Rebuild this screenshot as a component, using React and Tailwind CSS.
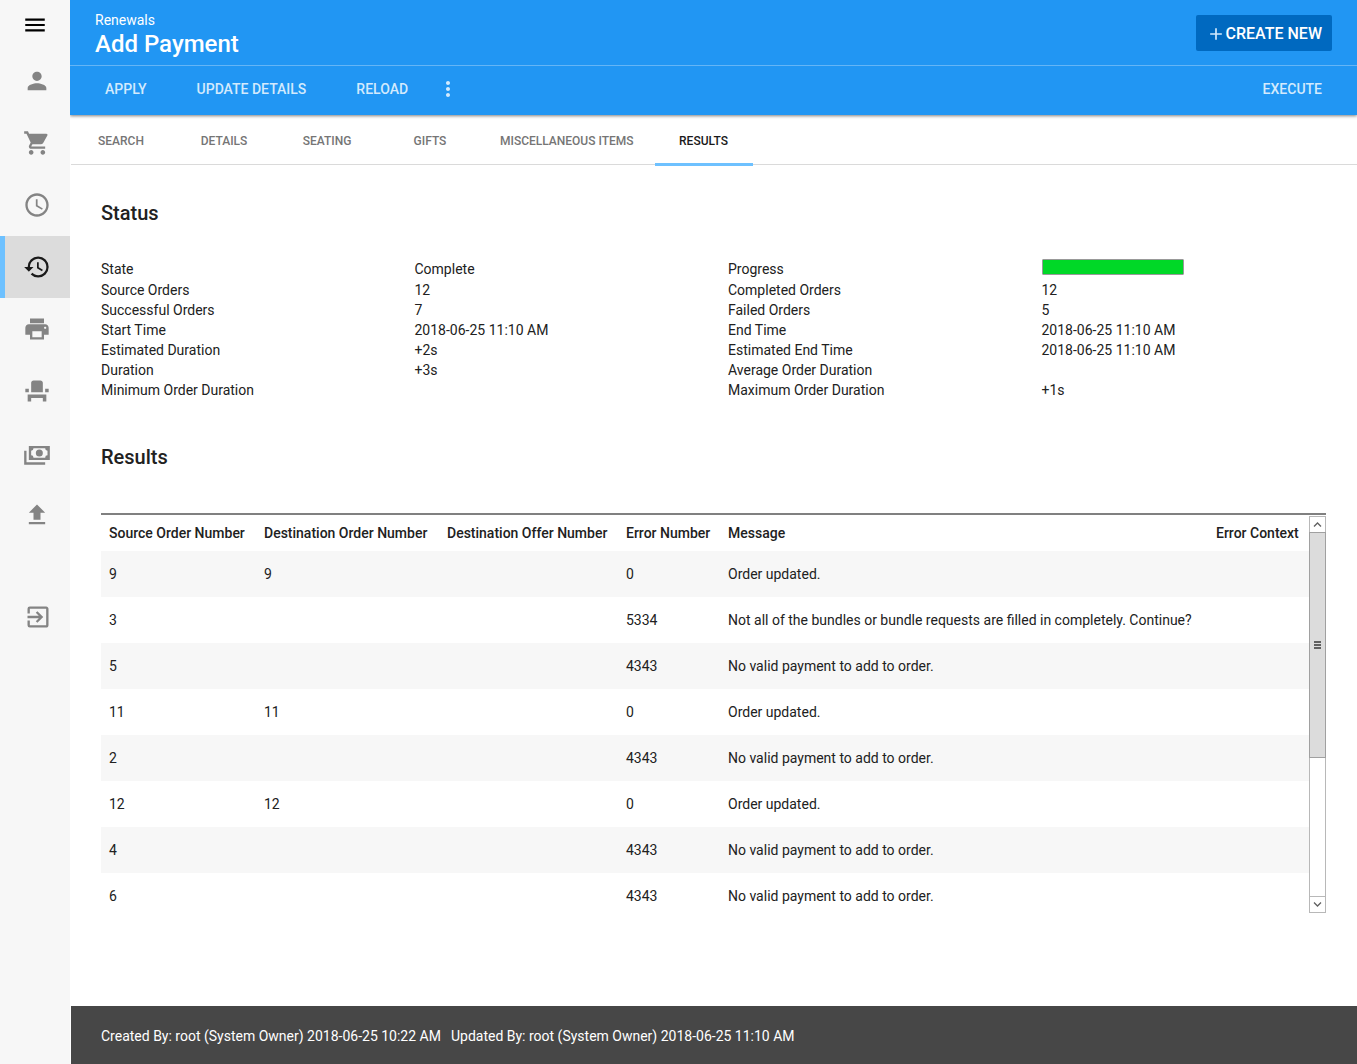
import React, { useState } from "react";
import {
  MdMenu,
  MdPerson,
  MdShoppingCart,
  MdAccessTime,
  MdHistory,
  MdPrint,
  MdEventSeat,
  MdFileUpload,
  MdExitToApp,
  MdMoreVert,
  MdAdd,
} from "react-icons/md";

// Stack of bank notes, the md set has no icon for it
function CashIcon({ className }) {
  return (
    <svg className={className} viewBox="0 0 24 24" fill="currentColor">
      <path d="M5,6H23V18H5V6M14,9A3,3 0 0,1 17,12A3,3 0 0,1 14,15A3,3 0 0,1 11,12A3,3 0 0,1 14,9M9,8A2,2 0 0,1 7,10V14A2,2 0 0,1 9,16H19A2,2 0 0,1 21,14V10A2,2 0 0,1 19,8H9M1,10H3V20H19V22H1V10Z" />
    </svg>
  );
}

const navItems = [
  { label: "Customers", icon: MdPerson },
  { label: "Orders", icon: MdShoppingCart },
  { label: "Schedule", icon: MdAccessTime },
  { label: "Renewals", icon: MdHistory, active: true },
  { label: "Printing", icon: MdPrint },
  { label: "Seating", icon: MdEventSeat },
  { label: "Payments", icon: CashIcon },
  { label: "Upload", icon: MdFileUpload },
];

const tabs = ["Search", "Details", "Seating", "Gifts", "Miscellaneous Items", "Results"];

const statusRows = [
  ["Source Orders", "12", "Completed Orders", "12"],
  ["Successful Orders", "7", "Failed Orders", "5"],
  ["Start Time", "2018-06-25 11:10 AM", "End Time", "2018-06-25 11:10 AM"],
  ["Estimated Duration", "+2s", "Estimated End Time", "2018-06-25 11:10 AM"],
  ["Duration", "+3s", "Average Order Duration", ""],
  ["Minimum Order Duration", "", "Maximum Order Duration", "+1s"],
];

const UPDATED = "Order updated.";
const NO_PAYMENT = "No valid payment to add to order.";

const results = [
  { source: 9, destination: 9, error: 0, message: UPDATED },
  {
    source: 3,
    error: 5334,
    message: "Not all of the bundles or bundle requests are filled in completely. Continue?",
  },
  { source: 5, error: 4343, message: NO_PAYMENT },
  { source: 11, destination: 11, error: 0, message: UPDATED },
  { source: 2, error: 4343, message: NO_PAYMENT },
  { source: 12, destination: 12, error: 0, message: UPDATED },
  { source: 4, error: 4343, message: NO_PAYMENT },
  { source: 6, error: 4343, message: NO_PAYMENT },
];

function Sidebar() {
  return (
    <nav className="relative z-10 w-[70px] shrink-0 bg-[#f7f7f7] text-[#848484]">
      <button className="flex h-[50px] w-full items-center justify-center text-black" aria-label="Menu">
        <MdMenu className="size-[26px]" />
      </button>
      {navItems.map(({ label, icon: Icon, active }) => (
        <a
          key={label}
          href="#"
          aria-label={label}
          className={`flex h-[62px] items-center justify-center border-l-5 pr-0.5 ${
            active ? "border-[#6ec1ff] bg-[#dcdcdc] text-[#1a1a1a]" : "border-transparent"
          }`}
        >
          <Icon className="size-7" />
        </a>
      ))}
      <a
        href="#"
        aria-label="Log out"
        className="mt-10 flex h-[62px] items-center justify-center border-l-5 border-transparent"
      >
        <MdExitToApp className="size-7" />
      </a>
    </nav>
  );
}

function ToolbarButton({ children }) {
  return <button className="h-full px-[25px] font-medium uppercase text-[#d3eafd]">{children}</button>;
}

function Header() {
  return (
    <header className="relative bg-[#2196f3] text-white shadow-[0_1px_3px_rgba(0,0,0,0.5)]">
      <div className="flex h-[66px] items-center justify-between border-b border-[#64b5f6] px-[25px]">
        <div className="flex flex-col pt-0.5">
          <span className="leading-5">Renewals</span>
          <h1 className="text-2xl font-medium leading-7">Add Payment</h1>
        </div>
        <button className="flex h-9 items-center rounded-xs bg-[#0069c0] pl-[10px] pr-[10px] pt-0.5 text-base font-medium">
          <MdAdd className="size-5 text-[#d3eafd]" />
          CREATE NEW
        </button>
      </div>
      <div className="flex h-[49px] items-center px-[10px] pb-[3px]">
        <ToolbarButton>Apply</ToolbarButton>
        <ToolbarButton>Update Details</ToolbarButton>
        <ToolbarButton>Reload</ToolbarButton>
        <button className="flex w-[30px] justify-center text-[#d3eafd]" aria-label="More actions">
          <MdMoreVert className="size-6" />
        </button>
        <div className="ml-auto h-full">
          <ToolbarButton>Execute</ToolbarButton>
        </div>
      </div>
    </header>
  );
}

function Tabs() {
  const [current, setCurrent] = useState("Results");

  return (
    <div role="tablist" className="ml-px flex h-[50px] gap-[5px] border-b border-[#dadada] pl-px">
      {tabs.map((tab) => (
        <button
          key={tab}
          role="tab"
          aria-selected={tab === current}
          onClick={() => setCurrent(tab)}
          className={`-mb-0.5 min-w-[98px] border-b-3 px-4 pt-1 text-xs font-medium uppercase ${
            tab === current ? "border-[#6ec1ff] text-[#1a1a1a]" : "border-transparent text-[#757575]"
          }`}
        >
          {tab}
        </button>
      ))}
    </div>
  );
}

function ProgressBar({ value }) {
  return (
    <div
      role="progressbar"
      aria-label="Progress"
      aria-valuenow={value}
      className="h-4 w-[142px] rounded-[1px] border border-[#999999] bg-white"
    >
      <div className="h-full bg-[#00d827]" style={{ width: `${value}%` }} />
    </div>
  );
}

function Status() {
  return (
    <section>
      <h2 className="text-xl font-medium leading-7">Status</h2>
      <div className="mt-8 grid grid-cols-4 pr-0.5 leading-5">
        <div>State</div>
        <div>Complete</div>
        <div>Progress</div>
        <div className="pb-[5px]">
          <ProgressBar value={100} />
        </div>
        {statusRows.flat().map((text, i) => (
          <div key={i} className="h-5">
            {text}
          </div>
        ))}
      </div>
    </section>
  );
}

function ScrollBar() {
  return (
    <div className="mt-px flex w-[17px] shrink-0 flex-col border border-[#b8b8b8] bg-white text-[#606060]">
      <button className="flex h-[15px] items-center justify-center" aria-label="Scroll up">
        <svg className="h-[5px] w-[9px]" viewBox="0 0 9 5" fill="none" stroke="currentColor">
          <path d="M1 4.5L4.5 1L8 4.5" strokeWidth="1.3" />
        </svg>
      </button>
      <div className="-mx-px grow">
        <div className="flex h-[62%] items-center justify-center border border-[#a0a0a0] bg-[#dcdcdc]">
          <svg className="h-2 w-[7px]" viewBox="0 0 7 8" fill="currentColor">
            <path d="M0 0h7v2H0zM0 3h7v2H0zM0 6h7v2H0z" />
          </svg>
        </div>
      </div>
      <button
        className="flex h-4 items-center justify-center border-t border-[#b8b8b8]"
        aria-label="Scroll down"
      >
        <svg className="h-[5px] w-[9px]" viewBox="0 0 9 5" fill="none" stroke="currentColor">
          <path d="M1 0.5L4.5 4L8 0.5" strokeWidth="1.3" />
        </svg>
      </button>
    </div>
  );
}

function ResultsTable() {
  return (
    <section className="mt-[43px] pr-[31px]">
      <h2 className="text-xl font-medium leading-7">Results</h2>
      <div className="mt-[42px] flex h-[400px] overflow-hidden border-t-2 border-[#808080]">
        <div className="grow overflow-hidden">
          <table className="w-full table-fixed text-left">
            <thead>
              <tr className="h-9 whitespace-nowrap">
                <th className="w-[155px] px-2 font-medium">Source Order Number</th>
                <th className="w-[183px] px-2 font-medium">Destination Order Number</th>
                <th className="w-[179px] px-2 font-medium">Destination Offer Number</th>
                <th className="w-[102px] px-2 font-medium">Error Number</th>
                <th className="px-2 font-medium">Message</th>
                <th className="w-[101px] px-2 font-medium">Error Context</th>
              </tr>
            </thead>
            <tbody>
              {results.map((row) => (
                <tr key={row.source} className="h-[46px] odd:bg-[#f7f7f7]">
                  <td className="px-2">{row.source}</td>
                  <td className="px-2">{row.destination}</td>
                  <td className="px-2"></td>
                  <td className="px-2">{row.error}</td>
                  <td className="px-2">{row.message}</td>
                  <td className="px-2"></td>
                </tr>
              ))}
            </tbody>
          </table>
        </div>
        <ScrollBar />
      </div>
    </section>
  );
}

function App() {
  return (
    <div className="flex min-h-screen bg-white font-['Roboto',sans-serif] text-sm text-[#212121]">
      <Sidebar />
      <div className="flex min-w-0 grow flex-col">
        <Header />
        <Tabs />
        <main className="grow pb-10 pl-[31px] pt-[34px]">
          <Status />
          <ResultsTable />
        </main>
        <footer className="ml-px flex h-[58px] items-center gap-[10px] bg-[#474747] px-[30px] pt-0.5 text-white">
          <span>Created By: root (System Owner) 2018-06-25 10:22 AM</span>
          <span>Updated By: root (System Owner) 2018-06-25 11:10 AM</span>
        </footer>
      </div>
    </div>
  );
}

export default App;
